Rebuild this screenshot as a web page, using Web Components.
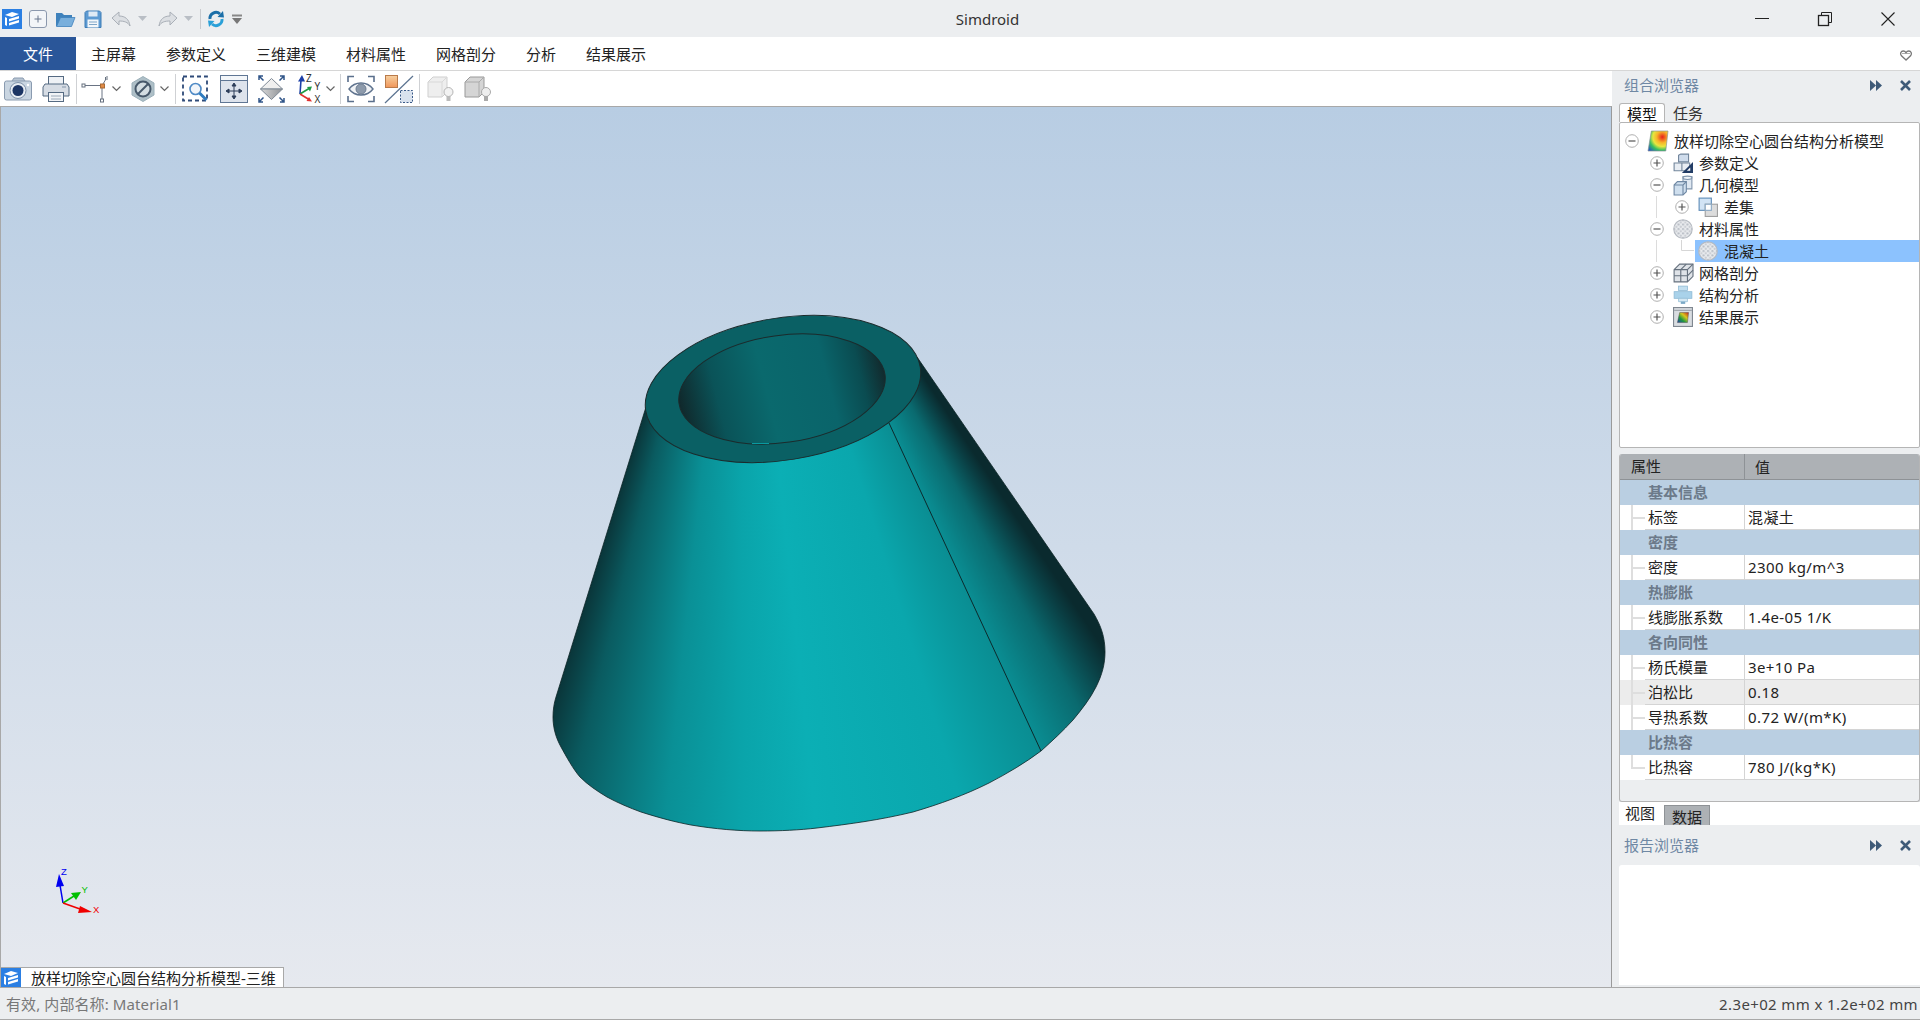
<!DOCTYPE html>
<html lang="zh">
<head>
<meta charset="utf-8">
<title>Simdroid</title>
<style>
  html, body { margin: 0; height: 100%; background: #fff; overflow: hidden; }
  body { font: 15px/20px "Noto Sans", "Noto Sans CJK SC", sans-serif; color: #222; }
</style>
</head>
<body>
<sd-app>
  <sd-titlebar slot="title" caption="Simdroid">
    <sd-icon name="app" w="20" h="20" style="margin-left:2px"></sd-icon>
    <sd-icon name="new" w="18" h="18" style="margin-left:7px"></sd-icon>
    <sd-icon name="open" w="20" h="16" style="margin-left:8px"></sd-icon>
    <sd-icon name="save" w="18" h="18" style="margin-left:9px"></sd-icon>
    <sd-icon name="undo" w="20" h="16" style="margin-left:9px"></sd-icon>
    <sd-icon name="drop" w="9" h="5" style="margin-left:7px"></sd-icon>
    <sd-icon name="redo" w="20" h="16" style="margin-left:11px"></sd-icon>
    <sd-icon name="drop" w="9" h="5" style="margin-left:6px"></sd-icon>
    <sd-icon name="vsep" w="1" h="20" style="margin-left:7px"></sd-icon>
    <sd-icon name="refresh" w="16" h="18" style="margin-left:7px"></sd-icon>
    <sd-icon name="custom" w="10" h="10" style="margin-left:8px"></sd-icon>
  </sd-titlebar>
  <sd-menubar slot="menu">
    <sd-menu-item file>文件</sd-menu-item>
    <sd-menu-item>主屏幕</sd-menu-item>
    <sd-menu-item>参数定义</sd-menu-item>
    <sd-menu-item>三维建模</sd-menu-item>
    <sd-menu-item>材料属性</sd-menu-item>
    <sd-menu-item>网格剖分</sd-menu-item>
    <sd-menu-item>分析</sd-menu-item>
    <sd-menu-item>结果展示</sd-menu-item>
  </sd-menubar>
  <sd-toolbar slot="tools">
    <sd-icon name="camera" w="28" h="24"></sd-icon>
    <sd-icon name="printer" w="28" h="26" style="margin-left:10px"></sd-icon>
    <sd-icon name="vsep2" w="1" h="30" style="margin-left:6px"></sd-icon>
    <sd-icon name="snap" w="30" h="28" style="margin-left:4px"></sd-icon>
    <sd-icon name="chev" w="9" h="6" style="margin-left:1px"></sd-icon>
    <sd-icon name="forbid" w="24" h="26" style="margin-left:10px"></sd-icon>
    <sd-icon name="chev" w="9" h="6" style="margin-left:5px"></sd-icon>
    <sd-icon name="vsep2" w="1" h="30" style="margin-left:6px"></sd-icon>
    <sd-icon name="zoomrect" w="26" h="28" style="margin-left:6px"></sd-icon>
    <sd-icon name="fit" w="28" h="28" style="margin-left:12px"></sd-icon>
    <sd-icon name="diamond" w="27" h="28" style="margin-left:10px"></sd-icon>
    <sd-icon name="axes" w="24" h="30" style="margin-left:13px"></sd-icon>
    <sd-icon name="chev" w="9" h="6" style="margin-left:4px"></sd-icon>
    <sd-icon name="vsep2" w="1" h="30" style="margin-left:5px"></sd-icon>
    <sd-icon name="eye" w="28" h="28" style="margin-left:6px"></sd-icon>
    <sd-icon name="split" w="28" h="28" style="margin-left:10px"></sd-icon>
    <sd-icon name="vsep2" w="1" h="30" style="margin-left:6px"></sd-icon>
    <sd-icon name="cubelight" w="27" h="26" style="margin-left:7px"></sd-icon>
    <sd-icon name="cubedark" w="28" h="26" style="margin-left:10px"></sd-icon>
  </sd-toolbar>
  <sd-viewport slot="view" tab="放样切除空心圆台结构分析模型-三维"></sd-viewport>
  <sd-side slot="side">
    <sd-dock-head h="32" lift="4">组合浏览器</sd-dock-head>
    <sd-tabstrip><span class="on">模型</span><span>任务</span></sd-tabstrip>
    <sd-tree>
      <sd-tree-row level="0" state="open" icon="colormap">放样切除空心圆台结构分析模型</sd-tree-row>
      <sd-tree-row level="1" state="closed" icon="param">参数定义</sd-tree-row>
      <sd-tree-row level="1" state="open" icon="geom">几何模型</sd-tree-row>
      <sd-tree-row level="2" state="closed" icon="diff" guide>差集</sd-tree-row>
      <sd-tree-row level="1" state="open" icon="material">材料属性</sd-tree-row>
      <sd-tree-row level="2" state="leaf" icon="material" guide selected>混凝土</sd-tree-row>
      <sd-tree-row level="1" state="closed" icon="mesh">网格剖分</sd-tree-row>
      <sd-tree-row level="1" state="closed" icon="analysis">结构分析</sd-tree-row>
      <sd-tree-row level="1" state="closed" icon="results">结果展示</sd-tree-row>
    </sd-tree>
    <sd-prop-table>
      <sd-prop-row group label="基本信息"></sd-prop-row>
      <sd-prop-row label="标签">混凝土</sd-prop-row>
      <sd-prop-row group label="密度"></sd-prop-row>
      <sd-prop-row label="密度">2300 kg/m^3</sd-prop-row>
      <sd-prop-row group label="热膨胀"></sd-prop-row>
      <sd-prop-row label="线膨胀系数">1.4e-05 1/K</sd-prop-row>
      <sd-prop-row group label="各向同性"></sd-prop-row>
      <sd-prop-row label="杨氏模量">3e+10 Pa</sd-prop-row>
      <sd-prop-row label="泊松比" alt>0.18</sd-prop-row>
      <sd-prop-row label="导热系数">0.72 W/(m*K)</sd-prop-row>
      <sd-prop-row group label="比热容"></sd-prop-row>
      <sd-prop-row label="比热容" end>780 J/(kg*K)</sd-prop-row>
    </sd-prop-table>
    <sd-bottomtabs><span>视图</span><span class="on">数据</span></sd-bottomtabs>
    <sd-dock-head h="40">报告浏览器</sd-dock-head>
    <sd-report></sd-report>
  </sd-side>
  <sd-statusbar slot="status" left="有效, 内部名称: Material1" right="2.3e+02 mm x 1.2e+02 mm"></sd-statusbar>
</sd-app>

<script>
const ICONS = {
  app: `<rect width="20" height="20" fill="#2b7fe3"/><g fill="#fff"><path d="M3 6 10 3l7 2-7 3z"/><path d="M3 8l2 1v8l-2-1z"/><path d="M7 10l10-3v2.500L7 12.500z"/><path d="M7 14l10-3v2.500L7 16.500z"/></g>`,
  new: `<rect x=".5" y=".5" width="17" height="17" rx="2.500" fill="#f3f5f8" stroke="#8b98ad"/><path d="M9 5.500v7M5.500 9h7" stroke="#66758c"/>`,
  open: `<path d="M1 15V2h6l2 2h8v3H6l-3 8z" fill="#3f82bc"/><path d="M1.500 15.500 5.500 6.500H20l-3.500 9z" fill="#79afdc" stroke="#3f82bc" stroke-width=".8"/>`,
  save: `<path d="M1 2.500 2.500 1h13L17 2.500v15H1z" fill="#5d9ad2" stroke="#3d7cb6"/><rect x="4.500" y="1.500" width="9" height="5" fill="#dfeaf5"/><rect x="3.500" y="9.500" width="11" height="8" fill="#f4f7fa"/><path d="M5 12h8M5 14.500h8" stroke="#7fa6c8"/>`,
  undo: `<path d="M1 7 8 1v4c6 0 10 3 11 10-2-4-6-5-11-5v4z" fill="#dcdfe3" stroke="#a9afb7"/>`,
  redo: `<path d="M19 7 12 1v4C6 5 2 8 1 15c2-4 6-5 11-5v4z" fill="#dcdfe3" stroke="#a9afb7"/>`,
  drop: `<path d="M0 0h9L4.500 5z" fill="#b9bec5"/>`,
  vsep: `<rect width="1" height="20" fill="#c8cace"/>`,
  vsep2: `<rect width="1" height="30" fill="#cfd1d4"/>`,
  refresh: `<path d="M2 9a6 6 0 0 1 10-5" fill="none" stroke="#1c6fa8" stroke-width="3"/><path d="M9.500 7 16 7.500 15 1z" fill="#1c6fa8"/><path d="M14 9a6 6 0 0 1-10 5" fill="none" stroke="#2aa0d8" stroke-width="3"/><path d="M6.500 11 0 10.500 1 17z" fill="#2aa0d8"/>`,
  custom: `<path d="M0 1.500h10" stroke="#888" stroke-width="2"/><path d="M0 4h10L5 10z" fill="#777"/>`,
  min: `<path d="M0 .5h14" stroke="#222"/>`,
  restore: `<path d="M3.500 3V.5h10v10H11" fill="none" stroke="#222"/><rect x=".5" y="3.500" width="10" height="10" fill="none" stroke="#222" stroke-width="1.300"/>`,
  close: `<path d="M.5.500l13 13M13.500.500l-13 13" stroke="#222" stroke-width="1.100"/>`,
  heart: `<path d="M6 10 1.200 5.500C-.2 3.500 1 1 3.200 1 4.500 1 5.500 1.800 6 2.800 6.500 1.800 7.500 1 8.800 1 11 1 12.200 3.500 10.800 5.500z" fill="#fff" stroke="#777" stroke-width="1.300"/><path d="M2 3.500h8" stroke="#999" stroke-width=".8"/>`,
  ff: `<path d="M0 0l6 5.500L0 11zM6 0l6 5.500L6 11z" fill="#3d5a78"/>`,
  x: `<path d="M1 1l9 9M10 1l-9 9" stroke="#3d5a78" stroke-width="2.600"/>`,
  camera: `<path d="M8 4l2-3h9l2 3" fill="#b8c5d3" stroke="#8a9bb0"/><rect x=".5" y="4" width="27" height="19" rx="2" fill="#c9d5e1" stroke="#8a9bb0"/><circle cx="14" cy="13.500" r="8" fill="#e8edf3" stroke="#7d90a8"/><circle cx="14" cy="13.500" r="5.500" fill="#1c3564"/><circle cx="24" cy="8" r="1.200" fill="#fff"/>`,
  printer: `<rect x="6.500" y=".5" width="15" height="8" fill="#eef1f5" stroke="#556a82"/><path d="M3 8h22l2 3v9H1v-9z" fill="#d6dce4" stroke="#556a82"/><rect x="6.500" y="16.500" width="15" height="9" fill="#f2f4f7" stroke="#556a82"/><path d="M9 20h10M9 23h10" stroke="#9aa8b8"/><path d="M20 11h4" stroke="#8395aa"/>`,
  snap: `<path d="M4 10.500h16M21 12v13M22 9l3-5" stroke="#6a7484" fill="none"/><rect x="1" y="9" width="3" height="3" fill="#fff" stroke="#66707f"/><rect x="19.500" y="9" width="4" height="4" fill="#e08a45" stroke="#a86a35"/><rect x="19.500" y="24" width="3" height="3" fill="#fff" stroke="#66707f"/><path d="M26 1v4M24.500 2v3" stroke="#66707f"/>`,
  forbid: `<path d="M12 .5 23 7v12l-11 6.500L1 19V7z" fill="#aebfc7" stroke="#9bb0ba"/><circle cx="12" cy="13" r="7.500" fill="#d3dde2" stroke="#46586a" stroke-width="2"/><path d="M7 18 17 8" stroke="#46586a" stroke-width="2"/>`,
  chev: `<path d="M.5.500 4.500 4.500 8.500.500" fill="none" stroke="#666" stroke-width="1.200"/>`,
  zoomrect: `<rect x="1" y="1.500" width="24" height="24" fill="none" stroke="#2e4a78" stroke-width="1.800" stroke-dasharray="4 3"/><circle cx="13.500" cy="14" r="5.500" fill="#f1f5fa" stroke="#4f8ac6" stroke-width="1.600"/><path d="M17.500 18l7 7" stroke="#2e7cc0" stroke-width="3"/>`,
  fit: `<rect x=".5" y=".5" width="27" height="27" fill="#dde3ec" stroke="#5f7694"/><rect x="1" y="1" width="26" height="4" fill="#f3f6f9"/><path d="M1 5.500h26" stroke="#5f7694"/><g fill="#2c3d58" stroke="#2c3d58"><path d="M14 9.500v13M7.500 16h13" fill="none"/><path d="M14 8l2 3h-4zM14 24l2-3h-4zM6 16l3-2v4zM22 16l-3-2v4z"/></g>`,
  diamond: `<defs><linearGradient id="d" x1="0" y1="0" x2="1" y2="0"><stop offset="0" stop-color="#d8d8d8"/><stop offset="1" stop-color="#8f9296"/></linearGradient></defs><path d="M13.500 3.500 24.500 14H2.500z" fill="#efefef" stroke="#7f8a96"/><path d="M2.500 14H24.500L13.500 24.500z" fill="url(#d)" stroke="#7f8a96"/><g stroke="#2f5488" stroke-width="1.500" fill="none"><path d="M1 5V1h4M1 1l4.500 4.500M26 5V1h-4M26 1l-4.500 4.500M1 23v4h4M1 27l4.500-4.500M26 23v4h-4M26 27l-4.500-4.500"/></g>`,
  axes: `<path d="M2 20L3 6" stroke="#1d3fa8" stroke-width="1.600"/><path d="M4 1l3 6.500H0z" fill="#1d3fa8"/><path d="M2 20l9-5.500" stroke="#1f9a45" stroke-width="1.600"/><path d="M14 12.500l-2 5-3-4.500z" fill="#1f9a45"/><path d="M2 20l9 5.500" stroke="#e03030" stroke-width="1.600"/><path d="M14 27.500l-5.500-.5 2.500-4z" fill="#e03030"/><g font-family="Noto Sans,sans-serif" font-size="10" fill="#333"><text x="8" y="8">Z</text><text x="16.500" y="16">Y</text><text x="16.500" y="29">X</text></g>`,
  eye: `<path d="M1 7V1.500h6M21 1.500h6V7M1 21v5.500h6M21 26.500h6V21" fill="none" stroke="#5a6f8c" stroke-width="1.600"/><path d="M2 14C8 6 20 6 26 14 20 22 8 22 2 14z" fill="#f1f3f6" stroke="#5f738e" stroke-width="1.400"/><circle cx="14" cy="14" r="5" fill="#8d9aab" stroke="#6d7d92"/>`,
  split: `<defs><linearGradient id="g" x1="0" y1="0" x2="0" y2="1"><stop offset="0" stop-color="#f6d0a0"/><stop offset="1" stop-color="#f0965a"/></linearGradient></defs><rect x=".5" y=".5" width="12" height="12" fill="url(#g)" stroke="#b97a4a"/><path d="M0 28 28 1" stroke="#5b7390" stroke-width="1.200"/><rect x="15.500" y="15.500" width="12" height="12" fill="#d9e2ee" stroke="#3a5a88" stroke-dasharray="2 1.500"/>`,
  cubelight: `<path d="M1 6l5-5h14v15l-5 5H1z" fill="#eeeeee" stroke="#cfcfcf"/><path d="M1 6h14v15M15 6l5-5" fill="none" stroke="#d8d8d8"/><circle cx="21.500" cy="16" r="4.500" fill="#f2f2f2" stroke="#b5b5b5"/><rect x="19.500" y="20" width="4" height="5" fill="#bbb"/>`,
  cubedark: `<path d="M1 6l5-5h14v15l-5 5H1z" fill="#d5d5d5" stroke="#999"/><path d="M1 6h14v15M15 6l5-5" fill="none" stroke="#aaa"/><circle cx="22" cy="16" r="4.500" fill="#eee" stroke="#aaa"/><rect x="20" y="20" width="4" height="5" fill="#aaa"/>`,
  colormap: `<defs><radialGradient id="g" cx=".72" cy=".3" r=".95"><stop offset="0" stop-color="#e8201c"/><stop offset=".3" stop-color="#f7b52a"/><stop offset=".5" stop-color="#e7e640"/><stop offset=".7" stop-color="#38c060"/><stop offset="1" stop-color="#1c50c8"/></radialGradient></defs><path d="M3 0h15l-2 18H0z" fill="url(#g)" stroke="#8a8f95" stroke-width=".6"/>`,
  param: `<path d="M5 2l2-1h7v7H5z" fill="#cfdcec" stroke="#73869c"/><path d="M1 9h7v7H1zM8 9h7v7H8z" fill="#e8edf3" stroke="#73869c"/><path d="M18 8v10H8z" fill="#233d66"/><path d="M15.500 13v3h-3z" fill="#fff"/>`,
  geom: `<path d="M9 1.500h8v11H9z" fill="#dfe8f2" stroke="#8196ad"/><ellipse cx="13" cy="2.500" rx="4" ry="1.500" fill="#eef3f8" stroke="#8196ad"/><path d="M1 9l3-3h8v9l-3 3H1z" fill="#cfdfee" stroke="#6f88a4"/><path d="M1 9h8v9M9 9l3-3" fill="none" stroke="#6f88a4"/>`,
  diff: `<rect x="1" y="1" width="11" height="11" fill="#d2e4f5" stroke="#5e8cb8"/><rect x="6.500" y="6.500" width="11" height="11" fill="#dcdcdc" stroke="#a0a0a0"/><rect x="6.500" y="6.500" width="5.500" height="5.500" fill="#fff" stroke="#8aa8c4"/>`,
  material: `<defs><pattern id="p" width="4" height="4" patternUnits="userSpaceOnUse"><rect width="4" height="4" fill="#e9ebee"/><circle cx="1" cy="1" r="1" fill="#b9bec6"/><circle cx="3" cy="3" r="1" fill="#c8ccd2"/></pattern></defs><circle cx="9" cy="9" r="8.300" fill="url(#p)" stroke="#b5bac1"/>`,
  mesh: `<path d="M1 6l5-5h12v11l-5 5H1z" fill="#dfe3e8" stroke="#66717e"/><path d="M1 6h12v11M13 6l5-5M7 6v11M1 11.500h12M7 6l5-5M13 11.500l5-5" fill="none" stroke="#66717e"/>`,
  analysis: `<rect x="5" y="1" width="8" height="4" fill="#c2dff0" stroke="#8db9d4" stroke-width=".7"/><rect x="1" y="6" width="16" height="6" fill="#a9d2ea" stroke="#8db9d4" stroke-width=".7"/><path d="M5 12h8v3H5z" fill="#d5e8f3" stroke="#94bdd6" stroke-width=".7"/><rect x="7" y="15" width="4" height="2" fill="#7ba9c6"/>`,
  results: `<defs><linearGradient id="g" x1="0" y1="1" x2="1" y2="0"><stop offset="0" stop-color="#1d3fa8"/><stop offset=".35" stop-color="#1f9a3e"/><stop offset=".65" stop-color="#d9c81e"/><stop offset="1" stop-color="#c9201a"/></linearGradient></defs><rect x=".5" y=".5" width="17" height="17" fill="#d9dde1" stroke="#7f8790"/><path d="M1 3h16" stroke="#9aa1a8"/><path d="M6 5h8l-1 9H4z" fill="url(#g)" stroke="#444" stroke-width=".4"/>`
};

class SdIcon extends HTMLElement {
  connectedCallback() {
    if (this.shadowRoot) return;
    const w = this.getAttribute("w"), h = this.getAttribute("h");
    const vb = this.getAttribute("vb") || `0 0 ${w} ${h}`;
    this.attachShadow({ mode: "open" }).innerHTML = `
      <style>:host{display:block;flex:none;width:${w}px;height:${h}px} svg{display:block;overflow:visible}</style>
      <svg width="${w}" height="${h}" viewBox="${vb}">${ICONS[this.getAttribute("name")] || ""}</svg>`;
  }
}

class SdApp extends HTMLElement {
  constructor() {
    super();
    this.attachShadow({ mode: "open" }).innerHTML = `
      <style>
        :host { display: flex; flex-direction: column; width: 1920px; height: 1021px; }
        .main { flex: 1; display: flex; min-height: 0; }
        .left { flex: none; width: 1612px; display: flex; flex-direction: column; }
      </style>
      <slot name="title"></slot>
      <slot name="menu"></slot>
      <div class="main">
        <div class="left"><slot name="tools"></slot><slot name="view"></slot></div>
        <slot name="side"></slot>
      </div>
      <slot name="status"></slot>`;
  }
}

class SdTitlebar extends HTMLElement {
  connectedCallback() {
    if (this.shadowRoot) return;
    this.attachShadow({ mode: "open" }).innerHTML = `
      <style>
        :host { display: flex; align-items: center; height: 37px; background: #eceef0; }
        .qat { width: 250px; display: flex; align-items: center; }
        .cap { flex: 1; text-align: center; color: #333; }
        .win { width: 195px; display: flex; align-items: center; }
      </style>
      <div class="qat"><slot></slot></div>
      <div class="cap">${this.getAttribute("caption")}</div>
      <div class="win">
        <sd-icon name="min" w="14" h="1" style="margin-left:30px;margin-top:-1px"></sd-icon>
        <sd-icon name="restore" w="14" h="14" style="margin-left:49px"></sd-icon>
        <sd-icon name="close" w="14" h="14" style="margin-left:49px"></sd-icon>
      </div>`;
  }
}

class SdMenubar extends HTMLElement {
  constructor() {
    super();
    this.attachShadow({ mode: "open" }).innerHTML = `
      <style>
        :host { display: flex; height: 33px; background: #fff; border-bottom: 1px solid #d6d6d6; align-items: stretch; }
        .sp { flex: 1; }
        sd-icon { align-self: center; margin-right: 8px; margin-top: 3px; }
      </style>
      <slot></slot><div class="sp"></div><sd-icon name="heart" w="12" h="11"></sd-icon>`;
  }
}

class SdMenuItem extends HTMLElement {
  constructor() {
    super();
    this.attachShadow({ mode: "open" }).innerHTML = `
      <style>
        :host { display: flex; align-items: center; padding: 0 15px; color: #222; }
        :host([file]) { background: #2a5699; color: #fff; width: 76px; padding: 0; justify-content: center; box-sizing: border-box; }
      </style><slot></slot>`;
  }
}

class SdToolbar extends HTMLElement {
  constructor() {
    super();
    this.attachShadow({ mode: "open" }).innerHTML = `
      <style>:host { display: flex; flex: none; align-items: center; height: 35px; padding-left: 4px; background: #fff; }</style>
      <slot></slot>`;
  }
}

class SdViewport extends HTMLElement {
  connectedCallback() {
    if (this.shadowRoot) return;
    const body = "M646 407L556 697C554 703 553 710 553 717C553 728 556 738 561 747C566 756 573 769 580 777C588 785 597 791 607 797C618 803 630 808 641 812C660 818 675 822 691 825C715 829 738 831 760 831C780 831 800 830 817 828C850 824 880 820 913 812C940 804 965 795 989 783C1008 773 1025 763 1041 751C1052 741 1063 731 1073 720C1082 709 1090 699 1096 687C1102 675 1105 664 1105 652C1105 637 1101 626 1094 614L917 357Z";
    this.attachShadow({ mode: "open" }).innerHTML = `
      <style>
        :host { display: flex; flex-direction: column; flex: 1; min-height: 0; box-sizing: border-box; position: relative; overflow: hidden;
          border-top: 1px solid #a8a8a8; border-left: 1px solid #a8a8a8; border-right: 1px solid #9a9a9a; background: linear-gradient(#b8cde3, #e6e9ef); }
        .canvas { flex: 1; position: relative; }
        .cone { position: absolute; left: -1px; top: -107px; width: 1612px; height: 987px;
          clip-path: path('${body}');
          background: conic-gradient(from 140deg at 741px 101px,
            #0a2a2e 6.5deg, #0a3d42 7.9deg, #0a6a6f 10.9deg, #0a8d92 15.2deg, #0aa7ad 22.6deg, #0bafb5 34.1deg,
            #0aa4aa 40deg, #0a9096 46deg, #0a5b60 53.8deg, #0a2a2e 58.3deg); }
        svg { position: absolute; left: -1px; top: -107px; }
        .tabs { flex: none; height: 20px; display: flex; }
        .tab { display: flex; align-items: center; background: #fff; border: 1px solid #a8a8a8; border-bottom: 0; border-left: 0; box-sizing: border-box; width: 283px; height: 20px; }
        .tab span { margin-left: 10px; white-space: nowrap; }
      </style>
      <div class="canvas">
        <div class="cone"></div>
        <svg width="1612" height="987" viewBox="0 0 1612 987">
          <defs>
            <linearGradient id="cav" gradientUnits="userSpaceOnUse" x1="680" y1="400" x2="886" y2="378">
              <stop offset="0" stop-color="#10292c"/><stop offset=".18" stop-color="#0a5358"/>
              <stop offset=".42" stop-color="#0a696d"/><stop offset=".72" stop-color="#0a646a"/>
              <stop offset=".88" stop-color="#0a4c51"/><stop offset="1" stop-color="#12292c"/>
            </linearGradient>
          </defs>
          <path d="${body}" fill="none" stroke="#0d2426" stroke-width=".8"/>
          <path d="M889 423L1041 751" stroke="#0d2a2c" stroke-width="1"/>
          <ellipse cx="783" cy="389" rx="139" ry="71" transform="rotate(-9 783 389)" fill="#0a6064" stroke="#1b2b2c" stroke-width="1"/>
          <ellipse cx="782" cy="389" rx="104" ry="53.600" transform="rotate(-8 782 389)" fill="url(#cav)" stroke="#1b2b2c" stroke-width="1"/>
          <path d="M752 443.500h17" stroke="#0a9aa0" stroke-width="1"/>
          <g>
            <path d="M63 903L60 885" stroke="#0000f0" stroke-width="1.500"/><path d="M59 874L64 886 56 887z" fill="#0000f0"/>
            <path d="M63 903L74 896" stroke="#00c000" stroke-width="1.500"/><path d="M81 892L76 900 71 893z" fill="#00c000"/>
            <path d="M63 903L80 909" stroke="#f00000" stroke-width="1.500"/><path d="M92 912L78 913 80 906z" fill="#f00000"/>
            <g font-family="Liberation Sans, sans-serif" font-size="9.500">
              <text x="61" y="875" fill="#0000f0">Z</text>
              <text x="81.500" y="893" fill="#00c000">Y</text>
              <text x="93" y="913" fill="#f00000">X</text>
            </g>
          </g>
        </svg>
      </div>
      <div class="tabs"><div class="tab"><sd-icon name="app" w="20" h="20"></sd-icon><span>${this.getAttribute("tab")}</span></div></div>`;
  }
}

class SdSide extends HTMLElement {
  constructor() {
    super();
    this.attachShadow({ mode: "open" }).innerHTML = `
      <style>:host { display: flex; flex-direction: column; flex: 1; min-width: 0; box-sizing: border-box; background: #eceef0; }</style>
      <slot></slot>`;
  }
}

class SdDockHead extends HTMLElement {
  connectedCallback() {
    if (this.shadowRoot) return;
    const lift = this.getAttribute("lift") || 0;
    this.attachShadow({ mode: "open" }).innerHTML = `
      <style>
        :host { display: flex; align-items: center; flex: none; box-sizing: border-box; height: ${this.getAttribute("h")}px; padding: 0 0 ${lift}px 12px; color: #6f88a4; }
        .sp { flex: 1; }
      </style>
      <slot></slot><div class="sp"></div>
      <sd-icon name="ff" w="12" h="11"></sd-icon>
      <sd-icon name="x" w="11" h="11" style="margin-left:18px;margin-right:9px"></sd-icon>`;
  }
}

class SdTabstrip extends HTMLElement {
  constructor() {
    super();
    this.attachShadow({ mode: "open" }).innerHTML = `
      <style>
        :host { display: flex; flex: none; height: 19px; padding-left: 7px; line-height: 20px; }
        ::slotted(span) { padding: 0 8px; color: #333; height: 19px; box-sizing: border-box; }
        ::slotted(.on) { background: #fff; border: 1px solid #b5b5b5; border-bottom: 0; border-radius: 3px 3px 0 0; color: #111; width: 46px; padding: 0 7px; }
      </style><slot></slot>`;
  }
}

class SdTree extends HTMLElement {
  constructor() {
    super();
    this.attachShadow({ mode: "open" }).innerHTML = `
      <style>:host { display: block; flex: none; height: 326px; box-sizing: border-box; margin-left: 7px; padding-top: 7px; background: #fff; border: 1px solid #b5b5b5; border-radius: 2px; }</style>
      <slot></slot>`;
  }
}

class SdTreeRow extends HTMLElement {
  connectedCallback() {
    if (this.shadowRoot) return;
    const level = +this.getAttribute("level");
    const state = this.getAttribute("state");
    const sel = this.hasAttribute("selected");
    const sign = state === "closed" ? "M3.500 7h7M7 3.500v7" : "M3.500 7h7";
    const exp = state === "leaf"
      ? `<svg width="24" height="22"><path d="M11.500 0V10.500H24" fill="none" stroke="#d6d6d6"/></svg>`
      : `<svg width="24" height="22" viewBox="-5 -4 24 22"><circle cx="7" cy="7" r="6.300" fill="#fff" stroke="#b0b0b0"/><path d="${sign}" stroke="#555" stroke-width="1.200"/></svg>`;
    this.attachShadow({ mode: "open" }).innerHTML = `
      <style>
        :host { display: flex; height: 22px; padding-left: ${level * 25}px; white-space: nowrap;
          background: ${this.hasAttribute("guide") ? "linear-gradient(#dcdcdc,#dcdcdc) 36px 0/1px 100% no-repeat" : "none"}; }
        svg { display: block; flex: none; }
        .exp { width: 25px; flex: none; }
        .body { flex: 1; display: flex; align-items: center; padding-left: 3px; gap: 6px; background: ${sel ? "#8cc2fe" : "transparent"}; }
      </style>
      <div class="exp">${exp}</div>
      <div class="body"><sd-icon name="${this.getAttribute("icon")}" w="20" h="20" vb="0 0 18 18"></sd-icon><slot></slot></div>`;
  }
}

class SdPropTable extends HTMLElement {
  constructor() {
    super();
    this.attachShadow({ mode: "open" }).innerHTML = `
      <style>
        :host { display: block; flex: none; height: 348px; box-sizing: border-box; margin: 6px 0 0 7px; background: #eceef0; border: 1px solid #b5b5b5; border-top: 0; border-radius: 3px; overflow: hidden; }
        .head { display: flex; height: 26px; background: #adb1b5; border-bottom: 1px solid #8e9296; box-sizing: border-box; align-items: center; }
        .head div:first-child { width: 125px; box-sizing: border-box; padding-left: 11px; border-right: 1px solid #8e9296; height: 100%; line-height: 25px; }
        .head div:last-child { padding-left: 10px; }
      </style>
      <div class="head"><div>属性</div><div>值</div></div>
      <slot></slot>`;
  }
}

class SdPropRow extends HTMLElement {
  connectedCallback() {
    if (this.shadowRoot) return;
    const label = this.getAttribute("label");
    if (this.hasAttribute("group")) {
      this.attachShadow({ mode: "open" }).innerHTML = `
        <style>:host { display: block; height: 25px; background: #bacfe2; padding-left: 28px; line-height: 25px; font-weight: 700; color: #6c7a8a; }</style>${label}`;
      return;
    }
    const bg = this.hasAttribute("alt") ? "#ececec" : "#fff";
    this.attachShadow({ mode: "open" }).innerHTML = `
      <style>
        :host { display: flex; height: 25px; background: ${bg}; line-height: 24px; }
        .gut { width: 25px; flex: none; box-sizing: border-box;
          background: linear-gradient(#dedede,#dedede) 11px 0/2px ${this.hasAttribute("end") ? "13px" : "100%"} no-repeat,
                      linear-gradient(#dedede,#dedede) 11px 12px/14px 2px no-repeat; }
        .k, .v { box-sizing: border-box; padding-left: 3px; border-bottom: 1px solid #d4d4d4; }
        .k { width: 100px; border-right: 1px solid #d4d4d4; }
        .v { flex: 1; letter-spacing: .4px; }
      </style>
      <div class="gut"></div><div class="k">${label}</div><div class="v"><slot></slot></div>`;
  }
}

class SdBottomtabs extends HTMLElement {
  constructor() {
    super();
    this.attachShadow({ mode: "open" }).innerHTML = `
      <style>
        :host { display: flex; flex: none; height: 23px; margin-left: 7px; padding-left: 6px; background: #fff; line-height: 22px; }
        ::slotted(span) { width: 39px; }
        ::slotted(.on) { width: 46px; height: 20px; margin-top: 3px; box-sizing: border-box; padding-left: 7px; background: #adb1b5; border: 1px solid #8e9296; border-bottom: 0; }
      </style><slot></slot>`;
  }
}

class SdReport extends HTMLElement {
  constructor() {
    super();
    this.attachShadow({ mode: "open" }).innerHTML = `
      <style>:host { display: block; flex: none; height: 120px; margin-left: 7px; background: #fff; border-radius: 3px 3px 0 0; }</style>`;
  }
}

class SdStatusbar extends HTMLElement {
  connectedCallback() {
    if (this.shadowRoot) return;
    this.attachShadow({ mode: "open" }).innerHTML = `
      <style>
        :host { display: flex; justify-content: space-between; align-items: center; flex: none; height: 33px; box-sizing: border-box; margin-bottom: 1px;
          padding: 0 2px 0 6px; background: #eceef0; border-top: 1px solid #a8a8a8; border-bottom: 1px solid #a8a8a8; }
        .l { color: #777; letter-spacing: .1px; } .r { color: #444; letter-spacing: .37px; }
      </style>
      <div class="l">${this.getAttribute("left")}</div><div class="r">${this.getAttribute("right")}</div>`;
  }
}

customElements.define("sd-icon", SdIcon);
customElements.define("sd-app", SdApp);
customElements.define("sd-titlebar", SdTitlebar);
customElements.define("sd-menubar", SdMenubar);
customElements.define("sd-menu-item", SdMenuItem);
customElements.define("sd-toolbar", SdToolbar);
customElements.define("sd-viewport", SdViewport);
customElements.define("sd-side", SdSide);
customElements.define("sd-dock-head", SdDockHead);
customElements.define("sd-tabstrip", SdTabstrip);
customElements.define("sd-tree", SdTree);
customElements.define("sd-tree-row", SdTreeRow);
customElements.define("sd-prop-table", SdPropTable);
customElements.define("sd-prop-row", SdPropRow);
customElements.define("sd-bottomtabs", SdBottomtabs);
customElements.define("sd-report", SdReport);
customElements.define("sd-statusbar", SdStatusbar);
</script>
</body>
</html>
